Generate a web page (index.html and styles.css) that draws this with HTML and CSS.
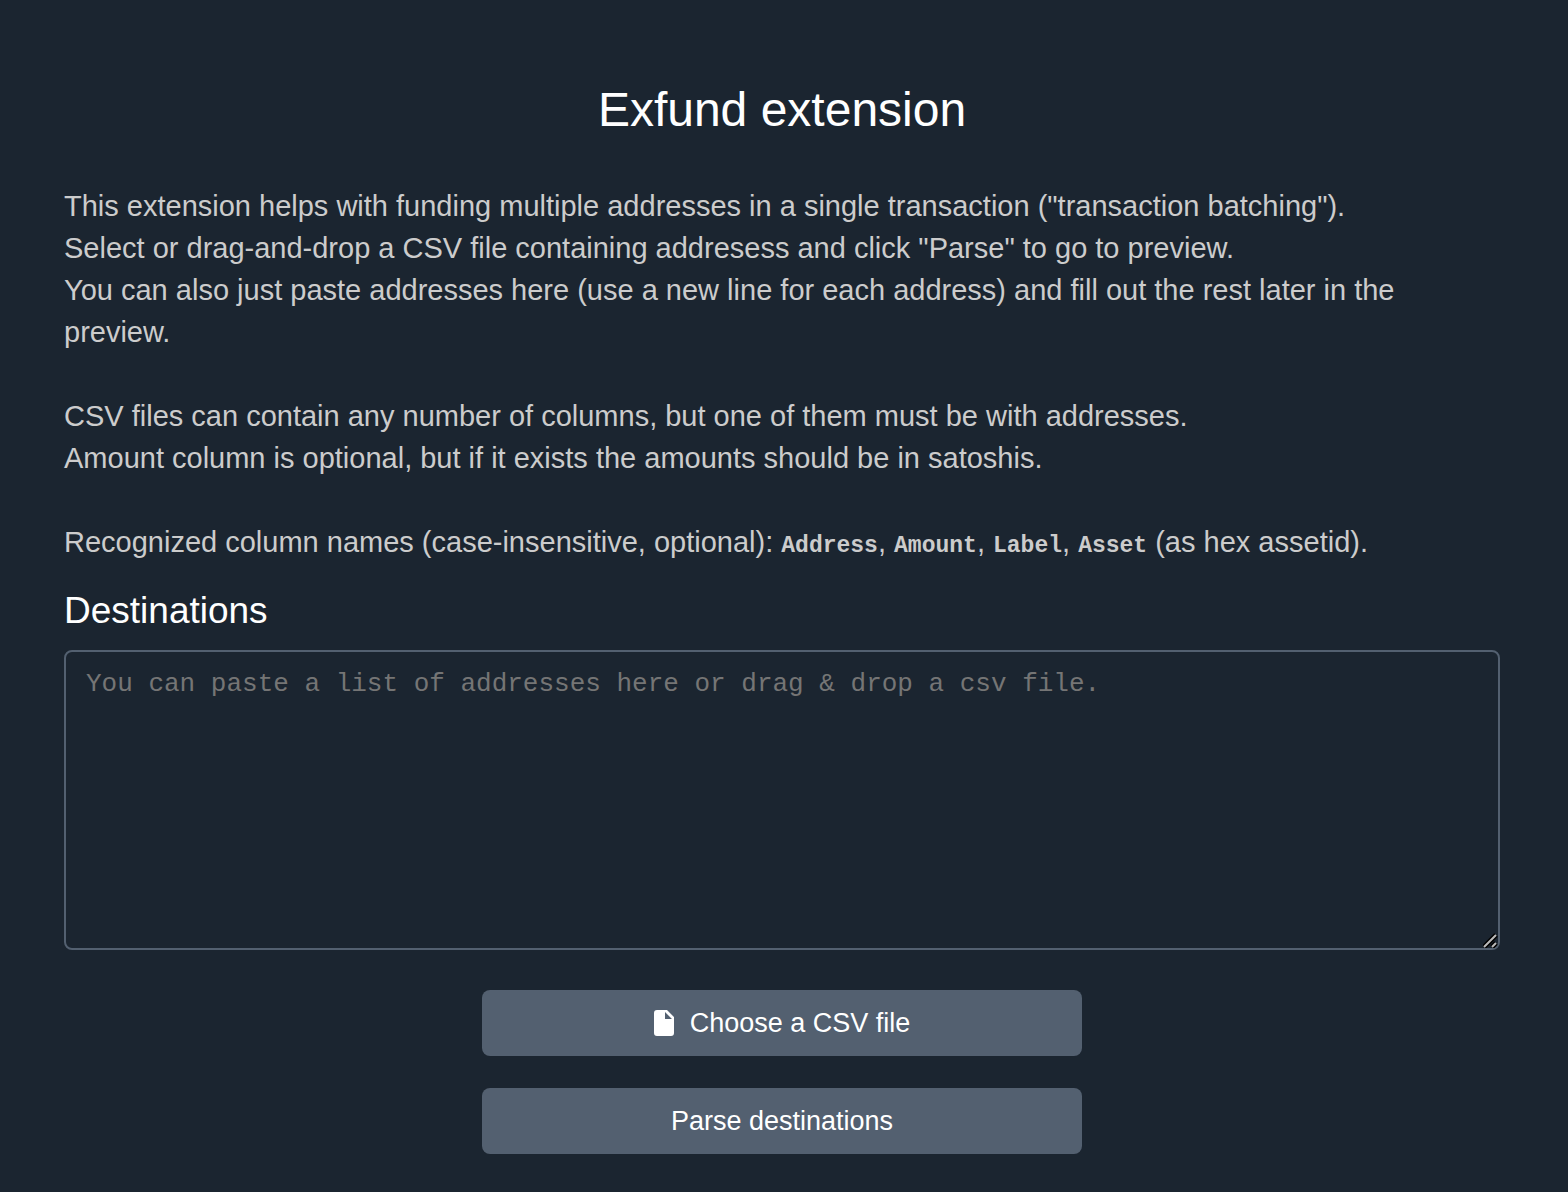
FILE: index.html
```html
<!DOCTYPE html>
<html lang="en">
<head>
  <meta charset="UTF-8" />
  <meta name="viewport" content="width=device-width, initial-scale=1" />
  <title>Exfund extension</title>
  <link rel="stylesheet" href="styles.css">
</head>
<body>
  <main class="container">
    <h1>Exfund extension</h1>

    <p class="description">
      This extension helps with funding multiple addresses in a single transaction ("transaction batching").<br>
      Select or drag-and-drop a CSV file containing addresess and click "Parse" to go to preview.<br>
      You can also just paste addresses here (use a new line for each address) and fill out the rest later in the preview.<br>
      <br>
      CSV files can contain any number of columns, but one of them must be with addresses.<br>
      Amount column is optional, but if it exists the amounts should be in satoshis.<br>
      <br>
      Recognized column names (case-insensitive, optional): <code>Address</code>, <code>Amount</code>, <code>Label</code>, <code>Asset</code> (as hex assetid).
    </p>

    <form class="destinations-form">
      <label class="title" for="destinations">Destinations</label>
      <textarea id="destinations" name="destinations" placeholder="You can paste a list of addresses here or drag &amp; drop a csv file."></textarea>

      <div class="actions">
        <button type="button" class="button" id="choose-file">
          <svg class="icon" viewBox="0 0 20 26" aria-hidden="true">
            <path fill="#fff" d="M3 0h10l7 7v16a3 3 0 0 1-3 3H3a3 3 0 0 1-3-3V3a3 3 0 0 1 3-3zm8 9h7l-7-7z"/>
          </svg>
          Choose a CSV file
        </button>
        <button type="submit" class="button">Parse destinations</button>
      </div>
    </form>
  </main>
</body>
</html>
```
FILE: styles.css
```css
* {
  box-sizing: border-box;
}

body {
  margin: 0;
  background: #1b2530;
  color: #fff;
  font-family: "Liberation Sans", Arial, sans-serif;
  font-size: 29px;
}

.container {
  padding: 80px 68px 38px 64px;
}

h1 {
  margin: 0 0 45px;
  font-size: 48px;
  font-weight: 400;
  line-height: 60px;
  text-align: center;
}

.description {
  margin: 0;
  color: #ccc;
  line-height: 42px;
}

code {
  font-family: "Liberation Mono", "Courier New", monospace;
  font-size: 23px;
  font-weight: 700;
}

.destinations-form {
  display: flex;
  flex-direction: column;
}

.title {
  margin: 20px 0 16px;
  font-size: 37px;
  line-height: 47px;
}

textarea {
  width: 100%;
  height: 300px;
  padding: 16px 20px;
  border: 2px solid #536070;
  border-radius: 8px;
  background: transparent;
  color: #fff;
  font-family: "Liberation Mono", "Courier New", monospace;
  font-size: 26px;
  line-height: 32px;
  resize: vertical;
}

textarea::placeholder {
  color: #757575;
}

textarea::-webkit-resizer {
  background: url("data:image/svg+xml,%3Csvg xmlns='http://www.w3.org/2000/svg' viewBox='0 0 15 15'%3E%3Cpath d='M1 14L13 2M9 14l4-4' stroke='%23000' stroke-width='5'/%3E%3Cpath d='M1 14L13 2M9 14l4-4' stroke='%23bbb' stroke-width='2'/%3E%3C/svg%3E") no-repeat;
}

.actions {
  display: flex;
  flex-direction: column;
  align-items: center;
  gap: 32px;
  margin-top: 40px;
}

.button {
  display: flex;
  align-items: center;
  justify-content: center;
  gap: 16px;
  width: 100%;
  max-width: 600px;
  height: 66px;
  border: none;
  border-radius: 8px;
  background: #536070;
  color: #fff;
  font-family: inherit;
  font-size: 27px;
  cursor: pointer;
}

.icon {
  width: 20px;
  height: 26px;
}
```
